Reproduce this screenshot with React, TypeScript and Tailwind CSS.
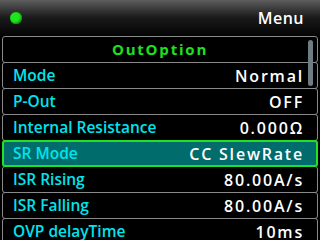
const rows = [
  { label: 'Mode', value: 'Normal' },
  { label: 'P-Out', value: 'OFF' },
  { label: 'Internal Resistance', value: '0.000Ω' },
  { label: 'SR Mode', value: 'CC SlewRate', active: true },
  { label: 'ISR Rising', value: '80.00A/s' },
  { label: 'ISR Falling', value: '80.00A/s' },
  { label: 'OVP delayTime', value: '10ms' },
];

export default function App() {
  return (
    <div
      className="relative w-[320px] h-[240px] overflow-hidden bg-black"
      style={{ fontFamily: '"Open Sans", "DejaVu Sans", sans-serif' }}
    >
      {/* title bar */}
      <div className="flex items-center justify-between h-[36px] pl-[10px] pr-[16px] bg-gradient-to-b from-[#5e5e5e] via-[#1a1a1a] to-[#050505]">
        <div className="w-[12px] h-[12px] rounded-full bg-[#1ee61e] shadow-[inset_-1px_-1px_2px_#0a8a0a]" />
        <span className="text-[16px] font-semibold text-white tracking-[0.5px]">Menu</span>
      </div>

      <div className="flex flex-col px-[2px] pt-px">
        <div className="flex items-center justify-center h-[27px] -mt-px border border-[#8a8a8a] rounded-[3px]">
          <span className="text-[15px] font-bold text-[#1fe01f] tracking-[1.8px]">OutOption</span>
        </div>
        {rows.map((row) => (
          <div
            key={row.label}
            className={
              row.active
                ? 'relative z-10 flex items-center justify-between h-[27px] -mt-px pl-[9px] pr-[12px] border-2 border-[#22e022] rounded-[3px] bg-[#006c6c]'
                : 'flex items-center justify-between h-[27px] -mt-px pl-[10px] pr-[13px] border border-[#8a8a8a] rounded-[3px]'
            }
          >
            <span className="text-[15.5px] font-semibold text-[#00e4ee]">{row.label}</span>
            <span className="text-[16px] font-semibold text-white tracking-[1.8px]">{row.value}</span>
          </div>
        ))}
      </div>

      {/* scrollbar */}
      <div className="absolute left-[308px] top-[40px] w-[5px] h-[46px] rounded-full bg-[#6f7d82]" />
    </div>
  );
}
